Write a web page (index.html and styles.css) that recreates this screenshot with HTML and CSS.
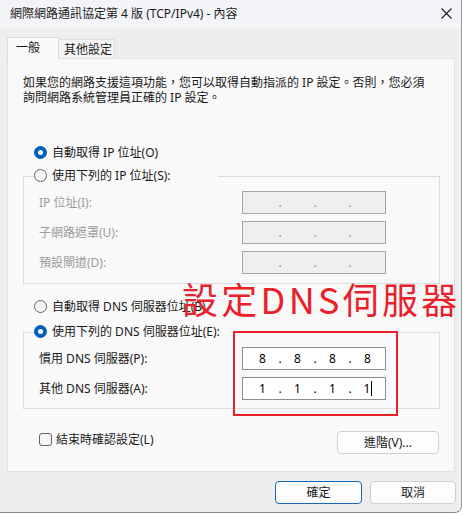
FILE: index.html
```html
<!DOCTYPE html>
<html lang="zh-Hant">
<head>
<meta charset="utf-8">
<title>網際網路通訊協定第 4 版 (TCP/IPv4) - 內容</title>
<link rel="stylesheet" href="styles.css">
</head>
<body>
<div class="window">
  <div class="titlebar">
    <span class="title">網際網路通訊協定第 4 版 (TCP/IPv4) - 內容</span>
    <span class="close"><svg width="11" height="11" viewBox="0 0 11 11"><path d="M0.5 0.5 L10.5 10.5 M10.5 0.5 L0.5 10.5" stroke="#1b1b1b" stroke-width="1.1" fill="none"/></svg></span>
  </div>
  <div class="client">
    <div class="tabs">
      <div class="tab tab-active">一般</div>
      <div class="tab tab-idle">其他設定</div>
    </div>
    <div class="panel">
      <p class="intro"><span class="intro-line">如果您的網路支援這項功能，您可以取得自動指派的 IP 設定。否則，您必須</span><span class="intro-line">詢問網路系統管理員正確的 IP 設定。</span></p>

      <div class="radio-row first-radio"><span class="radio checked"></span><span>自動取得 IP 位址(O)</span></div>

      <fieldset class="group group-ip">
        <legend class="legend legend-ip"><span class="radio"></span><span>使用下列的 IP 位址(S):</span></legend>
        <div class="fields">
          <div class="field disabled"><span class="label">IP 位址(I):</span>
            <div class="ipbox"><span class="seg"></span><span class="dot">.</span><span class="seg"></span><span class="dot">.</span><span class="seg"></span><span class="dot">.</span><span class="seg"></span></div>
          </div>
          <div class="field disabled"><span class="label">子網路遮罩(U):</span>
            <div class="ipbox"><span class="seg"></span><span class="dot">.</span><span class="seg"></span><span class="dot">.</span><span class="seg"></span><span class="dot">.</span><span class="seg"></span></div>
          </div>
          <div class="field disabled"><span class="label">預設閘道(D):</span>
            <div class="ipbox"><span class="seg"></span><span class="dot">.</span><span class="seg"></span><span class="dot">.</span><span class="seg"></span><span class="dot">.</span><span class="seg"></span></div>
          </div>
        </div>
      </fieldset>

      <div class="radio-row dns-auto"><span class="radio"></span><span>自動取得 DNS 伺服器位址(B)</span></div>

      <fieldset class="group group-dns">
        <legend class="legend legend-dns"><span class="radio checked"></span><span>使用下列的 DNS 伺服器位址(E):</span></legend>
        <div class="fields">
          <div class="field"><span class="label">慣用 DNS 伺服器(P):</span>
            <div class="ipbox"><span class="seg">8</span><span class="dot">.</span><span class="seg">8</span><span class="dot">.</span><span class="seg">8</span><span class="dot">.</span><span class="seg">8</span></div>
          </div>
          <div class="field"><span class="label">其他 DNS 伺服器(A):</span>
            <div class="ipbox"><span class="seg">1</span><span class="dot">.</span><span class="seg">1</span><span class="dot">.</span><span class="seg">1</span><span class="dot">.</span><span class="seg">1<span class="caret"></span></span></div>
          </div>
        </div>
      </fieldset>

      <div class="bottom-row">
        <label class="check-row"><span class="checkbox"></span><span>結束時確認設定(L)</span></label>
        <button class="btn btn-advanced">進階(V)...</button>
      </div>
    </div>

    <div class="footer">
      <button class="btn btn-ok">確定</button>
      <button class="btn btn-cancel">取消</button>
    </div>
  </div>

  <div class="annot-text">設定DNS伺服器</div>
  <div class="annot-box"></div>
</div>
</body>
</html>
```

FILE: styles.css
```css
* {
  box-sizing: border-box;
}

html, body {
  margin: 0;
  padding: 0;
  background: #ffffff;
}

body {
  font-family: "Noto Sans", "Noto Sans CJK TC", sans-serif;
  font-size: 12px;
  line-height: 15px;
  color: #1a1a1a;
}

.window {
  position: relative;
  width: 462px;
  height: 513px;
  background: #eeeeee;
  border-right: 1px solid #9a9a9a;
  border-bottom: 1px solid #8a8a8a;
  border-bottom-right-radius: 7px;
  overflow: hidden;
}

.titlebar {
  height: 28px;
  background: #f3f4f8;
  display: flex;
  align-items: center;
  justify-content: space-between;
  padding: 0 8px 1px 10px;
}

.title {
  color: #1b1b1b;
}

.close {
  display: flex;
  width: 11px;
  height: 11px;
  margin-right: 1px;
}

.client {
  padding: 9px 5px 0 7px;
}

.tabs {
  display: flex;
  align-items: flex-end;
  height: 21px;
}

.tab {
  color: #1a1a1a;
  line-height: 17px;
}

.tab-active {
  position: relative;
  z-index: 1;
  width: 52px;
  height: 22px;
  margin-bottom: -1px;
  padding: 1px 0 0 8px;
  background: #f9f9f9;
  border: 1px solid #dedede;
  border-bottom: none;
}

.tab-idle {
  width: 56px;
  height: 19px;
  padding: 1px 0 0 5px;
  background: #f3f3f3;
  border-top: 1px solid #dedede;
  border-right: 1px solid #dedede;
}

.panel {
  width: 448px;
  background: #f9f9f9;
  border: 1px solid #e1e1e1;
  padding: 16px 14px 17px 15px;
}

.intro {
  margin: 0;
  display: flex;
  flex-direction: column;
  white-space: nowrap;
}

.intro-line {
  display: block;
  height: 15px;
  line-height: 15px;
  overflow: visible;
}

.radio-row {
  display: flex;
  align-items: center;
  gap: 5px;
  height: 20px;
  margin-left: 11px;
}

.first-radio {
  margin-top: 37px;
}

.radio {
  position: relative;
  flex: none;
  width: 13px;
  height: 13px;
  border-radius: 50%;
  border: 1px solid #646464;
  background: #f4f4f4;
}

.radio.checked {
  background: #005fb8;
  border-color: #005fb8;
}

.radio.checked::after {
  content: "";
  position: absolute;
  left: 3px;
  top: 3px;
  width: 5px;
  height: 5px;
  border-radius: 50%;
  background: #ffffff;
}

.group {
  margin: 3px 0 0 0;
  padding: 4px 0 9px 15px;
  border: 1px solid #dcdcdc;
  min-width: 0;
}

.group-dns {
  margin-top: 5px;
  padding-bottom: 8px;
}

.legend {
  display: flex;
  align-items: center;
  gap: 5px;
  height: 22px;
  padding: 0 0 2px 1px;
  margin-left: -6px;
}

.legend-ip {
  width: 185px;
}

.legend-dns {
  width: 200px;
}

.dns-auto {
  margin-top: 12px;
}

.fields {
  display: grid;
  gap: 7px;
}

.field {
  display: flex;
  align-items: center;
  height: 23px;
}

.label {
  width: 203px;
  flex: none;
}

.field.disabled .label {
  color: #9c9c9c;
}

.ipbox {
  display: flex;
  align-items: center;
  width: 144px;
  height: 23px;
  padding-left: 6px;
  background: #ffffff;
  border: 1px solid #8c8c8c;
  color: #000000;
  font-size: 12px;
}

.field.disabled .ipbox {
  background: #efefef;
  border-color: #a6a6a6;
  color: #8a8a8a;
}

.seg {
  width: 27px;
  text-align: center;
}

.dot {
  width: 8px;
  text-align: center;
}

.caret {
  display: inline-block;
  width: 1px;
  height: 15px;
  margin-right: -1px;
  margin-left: 1px;
  vertical-align: -3px;
  background: #000000;
}

.bottom-row {
  display: flex;
  justify-content: space-between;
  align-items: flex-start;
  margin-top: 20px;
}

.check-row {
  display: flex;
  align-items: center;
  gap: 4px;
  height: 20px;
  margin-left: 16px;
}

.checkbox {
  width: 13px;
  height: 13px;
  border: 1px solid #646464;
  border-radius: 3px;
  background: #f7f7f7;
}

.btn {
  font-family: "Noto Sans", "Noto Sans CJK TC", sans-serif;
  font-size: 12px;
  line-height: 15px;
  color: #1a1a1a;
  height: 23px;
  padding: 0;
  background: #fdfdfd;
  border: 1px solid #d0d0d0;
  border-radius: 4px;
}

.btn-advanced {
  width: 102px;
  margin: 2px 1px 0 0;
}

.footer {
  display: flex;
  justify-content: flex-end;
  gap: 8px;
  margin-top: 9px;
}

.btn-ok {
  width: 87px;
  border-color: #1366b9;
}

.btn-cancel {
  width: 86px;
}

.annot-text {
  position: absolute;
  left: 182px;
  top: 280px;
  font-family: "Noto Sans CJK TC", sans-serif;
  font-size: 36px;
  line-height: 36px;
  letter-spacing: 3.3px;
  color: #e8212b;
  white-space: nowrap;
}

.annot-box {
  position: absolute;
  left: 233px;
  top: 331px;
  width: 165px;
  height: 85px;
  border: 2px solid #e8212b;
}
```
